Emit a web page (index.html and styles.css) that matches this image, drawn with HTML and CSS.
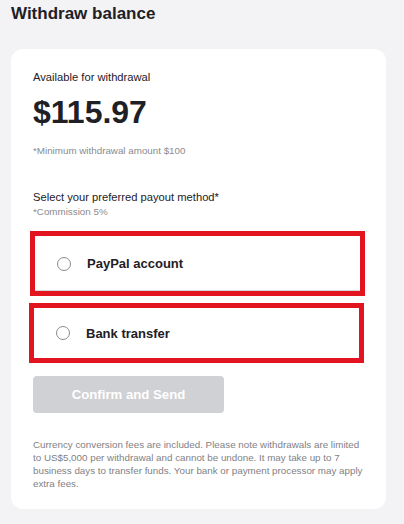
FILE: index.html
```html
<!DOCTYPE html>
<html lang="en">
<head>
<meta charset="utf-8">
<title>Withdraw balance</title>
<link rel="stylesheet" href="styles.css">
</head>
<body>
<h1 class="page-title">Withdraw balance</h1>
<section class="card">
  <p class="label">Available for withdrawal</p>
  <p class="amount">$115.97</p>
  <p class="note">*Minimum withdrawal amount $100</p>

  <p class="label select-label">Select your preferred payout method*</p>
  <p class="note commission">*Commission 5%</p>

  <div class="options">
    <label class="option option--paypal">
      <span class="radio"></span>
      <span class="option-text">PayPal account</span>
    </label>
    <label class="option option--bank">
      <span class="radio"></span>
      <span class="option-text">Bank transfer</span>
    </label>
  </div>

  <button class="confirm" type="button" disabled>Confirm and Send</button>

  <p class="disclaimer">Currency conversion fees are included. Please note withdrawals are limited to US$5,000 per withdrawal and cannot be undone. It may take up to 7 business days to transfer funds. Your bank or payment processor may apply extra fees.</p>
</section>
</body>
</html>
```

FILE: styles.css
```css
* {
  box-sizing: border-box;
}

html, body {
  margin: 0;
  padding: 0;
}

body {
  background: #f3f3f5;
  font-family: "Liberation Sans", Arial, sans-serif;
  color: #1e2025;
  width: 404px;
  height: 524px;
  overflow: hidden;
}

.page-title {
  margin: 0;
  padding: 4px 0 0 11px;
  font-size: 17px;
  line-height: 20px;
  font-weight: 700;
  color: #1e2025;
}

.card {
  margin: 25px 18px 0 11px;
  background: #ffffff;
  border-radius: 12px;
  padding: 21px 22px 0 22px;
  height: 460px;
  display: flex;
  flex-direction: column;
}

.card > * {
  flex-shrink: 0;
}

.card p {
  margin: 0;
}

.label {
  font-size: 11.2px;
  line-height: 14px;
  color: #1e2025;
}

.amount {
  margin-top: 10px !important;
  font-size: 32px;
  line-height: 36px;
  font-weight: 700;
  color: #1e2025;
}

.note {
  margin-top: 15px !important;
  font-size: 9.8px;
  line-height: 12px;
  color: #8a8b90;
}

.select-label {
  margin-top: 33px !important;
}

.commission {
  margin-top: 2px !important;
}

.options {
  margin-top: 13px;
  display: flex;
  flex-direction: column;
  gap: 7px;
  margin-left: -3px;
  margin-right: -1px;
}

.option {
  display: flex;
  align-items: center;
  gap: 16px;
  border: 5px solid #e2141f;
  padding-left: 22px;
  background: #ffffff;
}

.option--paypal {
  height: 65px;
  box-shadow: inset 0 -1px 0 #d8d9dc;
}

.option--bank {
  height: 60px;
  margin-left: -1px;
  margin-right: 1px;
}

.radio {
  width: 14px;
  height: 14px;
  border-radius: 50%;
  border: 1px solid #8b8b8b;
  flex: none;
}

.option-text {
  font-size: 13px;
  font-weight: 700;
  color: #1e2025;
}

.confirm {
  margin-top: 13px;
  width: 191px;
  height: 37px;
  border: none;
  border-radius: 4px;
  background: #d0d1d4;
  color: #ffffff;
  font-family: "Liberation Sans", Arial, sans-serif;
  font-size: 13.2px;
  font-weight: 700;
  padding: 0;
}

.disclaimer {
  margin-top: 25px !important;
  font-size: 9.8px;
  line-height: 13px;
  color: #7f8186;
}
```
